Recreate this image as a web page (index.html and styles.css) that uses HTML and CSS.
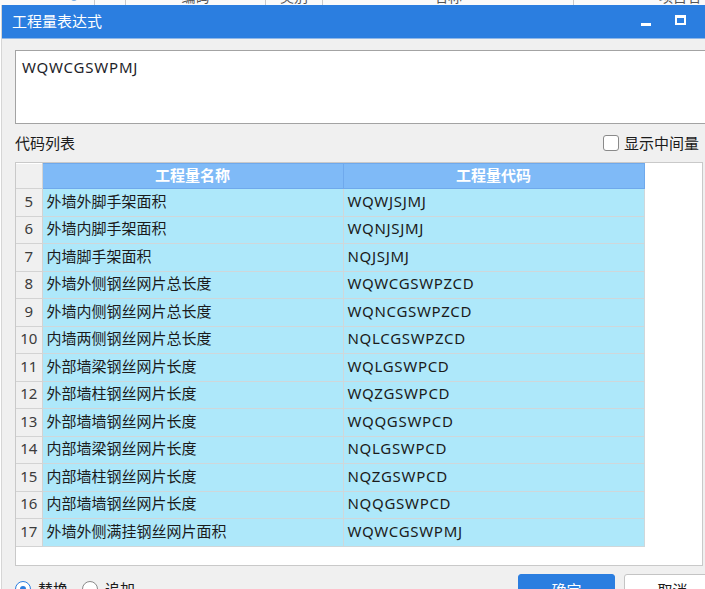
FILE: index.html
```html
<!DOCTYPE html>
<html lang="zh-CN">
<head>
<meta charset="utf-8">
<title>工程量表达式</title>
<link rel="stylesheet" href="styles.css">
</head>
<body>
<div class="app-strip">
  <div class="strip-row">
    <div class="sc sc-a"><svg class="search" width="10" height="10" viewBox="0 0 10 10"><circle cx="4" cy="4" r="3" fill="none" stroke="#4a8fd8" stroke-width="1.5"/></svg></div>
    <div class="sc sc-b"></div>
    <div class="sc sc-c">编码</div>
    <div class="sc sc-d">类别</div>
    <div class="sc sc-e">名称</div>
    <div class="sc sc-f">项目名</div>
  </div>
</div>
<div class="window">
  <div class="titlebar">
    <span class="title">工程量表达式</span>
    <span class="tb-btn tb-min"><span class="min-icon"></span></span>
    <span class="tb-btn tb-max"><span class="max-icon"></span></span>
  </div>
  <div class="window-body">
    <div class="expr-box">WQWCGSWPMJ</div>
    <div class="list-head">
      <span>代码列表</span>
      <label class="check"><span class="check-box"></span><span>显示中间量</span></label>
    </div>
    <div class="grid-box">
      <table class="grid">
        <colgroup><col class="c-num"><col class="c-name"><col class="c-code"></colgroup>
        <thead>
          <tr class="head-row"><th class="corner"></th><th>工程量名称</th><th>工程量代码</th></tr>
        </thead>
        <tbody>
          <tr><td class="num">5</td><td>外墙外脚手架面积</td><td class="code">WQWJSJMJ</td></tr>
          <tr><td class="num">6</td><td>外墙内脚手架面积</td><td class="code">WQNJSJMJ</td></tr>
          <tr><td class="num">7</td><td>内墙脚手架面积</td><td class="code">NQJSJMJ</td></tr>
          <tr><td class="num">8</td><td>外墙外侧钢丝网片总长度</td><td class="code">WQWCGSWPZCD</td></tr>
          <tr><td class="num">9</td><td>外墙内侧钢丝网片总长度</td><td class="code">WQNCGSWPZCD</td></tr>
          <tr><td class="num">10</td><td>内墙两侧钢丝网片总长度</td><td class="code">NQLCGSWPZCD</td></tr>
          <tr><td class="num">11</td><td>外部墙梁钢丝网片长度</td><td class="code">WQLGSWPCD</td></tr>
          <tr><td class="num">12</td><td>外部墙柱钢丝网片长度</td><td class="code">WQZGSWPCD</td></tr>
          <tr><td class="num">13</td><td>外部墙墙钢丝网片长度</td><td class="code">WQQGSWPCD</td></tr>
          <tr><td class="num">14</td><td>内部墙梁钢丝网片长度</td><td class="code">NQLGSWPCD</td></tr>
          <tr><td class="num">15</td><td>内部墙柱钢丝网片长度</td><td class="code">NQZGSWPCD</td></tr>
          <tr><td class="num">16</td><td>内部墙墙钢丝网片长度</td><td class="code">NQQGSWPCD</td></tr>
          <tr><td class="num">17</td><td>外墙外侧满挂钢丝网片面积</td><td class="code">WQWCGSWPMJ</td></tr>
        </tbody>
      </table>
    </div>
    <div class="footer">
      <label class="radio"><span class="radio-dot checked"></span><span>替换</span></label>
      <label class="radio"><span class="radio-dot"></span><span>追加</span></label>
      <div class="buttons">
        <button class="btn primary">确定</button>
        <button class="btn">取消</button>
      </div>
    </div>
  </div>
</div>
</body>
</html>
```
FILE: styles.css
```css
html, body {
  margin: 0;
  padding: 0;
}
body {
  width: 705px;
  height: 589px;
  overflow: hidden;
  background: #ffffff;
  font-family: "Noto Sans", "Noto Sans CJK SC", sans-serif;
  font-size: 15px;
  color: #1b1b1b;
}

/* underlying app, only its bottom edge visible */
.app-strip {
  height: 5px;
  overflow: hidden;
  background: #fafafa;
}
.strip-row {
  display: flex;
  margin-top: -11px;
  height: 16px;
  font-size: 14px;
  line-height: 16px;
  color: #555;
}
.sc {
  border-right: 1px solid #c9c9c9;
  text-align: center;
  flex: none;
  box-sizing: border-box;
}
.sc-a { width: 95px; position: relative; }
.search { position: absolute; right: 14px; top: 4px; }
.sc-b { width: 31px; }
.sc-c { width: 140px; }
.sc-d { width: 57px; }
.sc-e { width: 251px; }
.sc-f { width: 212px; border-right: none; }

.window {
  margin-left: 1px;
  width: 730px;
  border-left: 1px solid #d6d6d6;
}

.titlebar {
  height: 33px;
  background: #2b7ee0;
  display: flex;
  align-items: center;
  padding-left: 10px;
  color: #ffffff;
}
.title {
  font-size: 15px;
  line-height: 33px;
  margin-right: auto;
}
.tb-btn {
  width: 36px;
  height: 33px;
  display: flex;
  align-items: center;
  justify-content: center;
}
.tb-min { margin-right: -2px; }
.tb-max { margin-right: 34px; }
.min-icon {
  width: 10px;
  height: 3px;
  background: #ffffff;
  margin-top: 6px;
}
.max-icon {
  width: 7px;
  height: 5px;
  border: 2px solid #ffffff;
  border-top-width: 3px;
  margin-top: -4px;
}

.window-body {
  background: #f0f0f0;
  border-top: 1px solid #8fb7e8;
  padding: 11px 11px 20px 13px;
}

.expr-box {
  border: 1px solid #a3a3a3;
  background: #ffffff;
  padding: 6px 6px;
  box-sizing: border-box;
  height: 74px;
  line-height: 20px;
  letter-spacing: 0.8px;
  color: #1e1e2a;
}

.list-head {
  width: 684px;
  height: 38px;
  display: flex;
  align-items: center;
  justify-content: space-between;
  line-height: 20px;
}
.check {
  display: flex;
  align-items: center;
  gap: 5px;
}
.check-box {
  width: 14px;
  height: 14px;
  border: 1px solid #8a8a8a;
  border-radius: 3px;
  background: #ffffff;
}

.grid-box {
  width: 688px;
  height: 404px;
  box-sizing: border-box;
  border: 1px solid #c9c9c9;
  background: #ffffff;
}
.grid {
  border-collapse: collapse;
  table-layout: fixed;
  width: 628px;
}
.c-num { width: 26px; }
.c-name { width: 301px; }
.c-code { width: 301px; }
.grid tr { height: 27.5px; }
.grid tr.head-row { height: 25px; }
.grid th {
  padding: 0 0 3px;
  background: #7fbaf7;
  border: 1px solid #6fa9ec;
  color: #ffffff;
  font-weight: 700;
  font-size: 15px;
  line-height: 20px;
  text-align: center;
}
.grid th.corner {
  background: #f0f0f0;
  border: 1px solid #d3d3d3;
  border-top: none;
  border-left: none;
}
.grid td {
  padding: 0 4px 3px;
  background: #aee8fa;
  border: 1px solid #cfd7da;
  line-height: 20px;
  white-space: nowrap;
  overflow: hidden;
}
.grid td.code {
  letter-spacing: 0.7px;
}
.grid td.num {
  background: #f0f0f0;
  border-color: #d3d3d3;
  border-left: none;
  padding: 0 0 3px;
  text-align: center;
  color: #3c3c3c;
}

.footer {
  display: flex;
  align-items: flex-start;
  padding-top: 8px;
}
.radio {
  display: flex;
  align-items: center;
  gap: 7px;
  margin-top: 6px;
  margin-right: 14px;
  line-height: 18px;
}
.radio-dot {
  width: 14px;
  height: 14px;
  border: 1px solid #8a8a8a;
  border-radius: 50%;
  background: #ffffff;
  position: relative;
}
.radio-dot.checked {
  border-color: #2b7ee0;
}
.radio-dot.checked::after {
  content: "";
  position: absolute;
  left: 4px;
  top: 4px;
  width: 6px;
  height: 6px;
  border-radius: 50%;
  background: #2b7ee0;
}
.buttons {
  margin-left: auto;
  display: flex;
  gap: 9px;
}
.btn {
  width: 97px;
  height: 30px;
  border: 1px solid #c4c4c4;
  border-radius: 3px;
  background: #ffffff;
  font-family: inherit;
  font-size: 15px;
  color: #1b1b1b;
  padding: 0;
}
.btn.primary {
  background: #2b7ee0;
  border-color: #2b7ee0;
  color: #ffffff;
}
```
